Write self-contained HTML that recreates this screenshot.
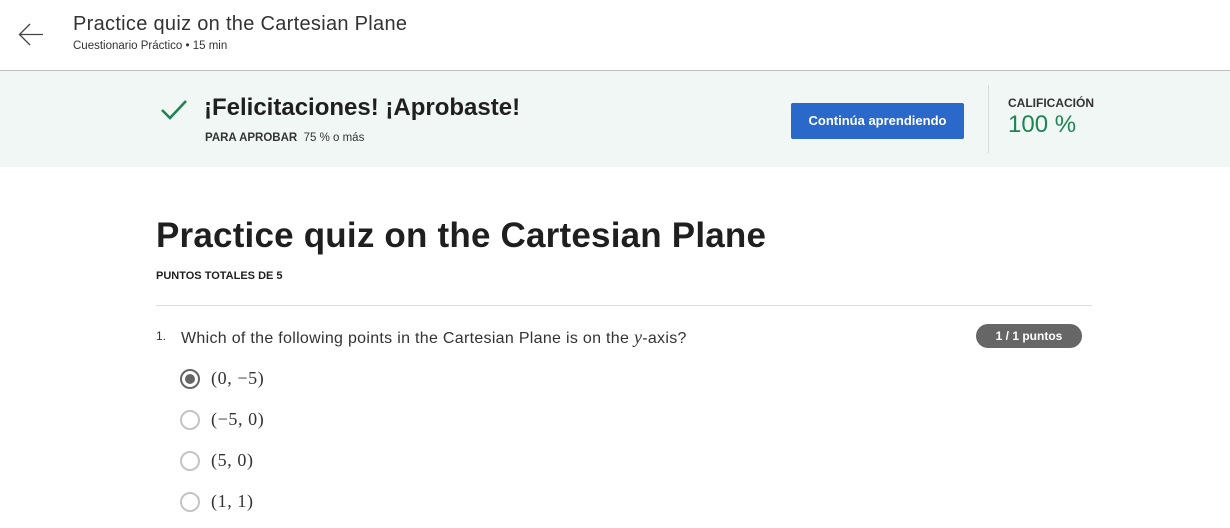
<!DOCTYPE html>
<html><head><meta charset="utf-8"><style>
*{margin:0;padding:0;box-sizing:border-box}
body{width:1230px;height:528px;overflow:hidden;background:#fff;font-family:"Liberation Sans",sans-serif;color:#1f1f1f;position:relative}
.abs{position:absolute;white-space:nowrap}
.serif{font-family:"Liberation Serif",serif;font-size:18px;color:#333;letter-spacing:0.6px}
.radio{position:absolute;width:20px;height:20px;border:2px solid #c4c4c4;border-radius:50%}
</style></head><body>
<svg class="abs" style="left:18px;top:22px" width="26" height="26" viewBox="0 0 26 26"><path d="M25 12.5H2M12 2L1.5 12.5 12 23" fill="none" stroke="#444" stroke-width="1.3"/></svg>
<div class="abs" style="left:73px;top:13px;font-size:20px;color:#333;letter-spacing:0.3px">Practice quiz on the Cartesian Plane</div>
<div class="abs" style="left:73px;top:40px;font-size:11.5px;color:#333">Cuestionario Práctico • 15 min</div>
<div class="abs" style="left:0;top:70px;width:1230px;height:1px;background:#bdbdbd"></div>
<div class="abs" style="left:0;top:71px;width:1230px;height:96px;background:#f0f7f5"></div>
<svg class="abs" style="left:160px;top:99px" width="28" height="22" viewBox="0 0 28 22"><path d="M2 11l8 8L26 2" fill="none" stroke="#1f8354" stroke-width="2.6"/></svg>
<div class="abs" style="left:204px;top:94px;font-size:24px;font-weight:bold;color:#1f1f1f">¡Felicitaciones! ¡Aprobaste!</div>
<div class="abs" style="left:205px;top:132px;font-size:11.5px;color:#333"><b>PARA APROBAR</b>&nbsp; 75 % o más</div>
<div class="abs" style="left:791px;top:103px;width:173px;height:36px;background:#2a69c9;border-radius:2px;color:#fff;font-size:13px;font-weight:bold;text-align:center;line-height:36px">Continúa aprendiendo</div>
<div class="abs" style="left:988px;top:85px;width:1px;height:68px;background:#d8dcdb"></div>
<div class="abs" style="left:1008px;top:96px;font-size:12px;font-weight:bold;color:#333">CALIFICACIÓN</div>
<div class="abs" style="left:1008px;top:111px;font-size:24px;color:#1f8354">100 %</div>
<div class="abs" style="left:156px;top:216px;font-size:35px;font-weight:bold;color:#1f1f1f;letter-spacing:0.2px">Practice quiz on the Cartesian Plane</div>
<div class="abs" style="left:156px;top:270px;font-size:11px;font-weight:bold;color:#1f1f1f">PUNTOS TOTALES DE 5</div>
<div class="abs" style="left:156px;top:305px;width:936px;height:1px;background:#ddd"></div>
<div class="abs" style="left:156px;top:329px;font-size:12px;color:#333">1.</div>
<div class="abs" style="left:181px;top:327px;font-size:16px;color:#333;letter-spacing:0.3px">Which of the following points in the Cartesian Plane is on the <i style="font-family:'Liberation Serif',serif;font-size:18px">y</i>-axis?</div>
<div class="abs" style="left:976px;top:324px;width:106px;height:24px;border-radius:12px;background:#666;color:#fff;font-size:12px;font-weight:bold;text-align:center;line-height:24px">1 / 1 puntos</div>
<div class="radio" style="left:180px;top:369px;border-color:#666"><div style="position:absolute;left:3px;top:3px;width:10px;height:10px;border-radius:50%;background:#666"></div></div>
<div class="abs serif" style="left:211px;top:368px">(0, −5)</div>
<div class="radio" style="left:180px;top:410px"></div>
<div class="abs serif" style="left:211px;top:409px">(−5, 0)</div>
<div class="radio" style="left:180px;top:451px"></div>
<div class="abs serif" style="left:211px;top:450px">(5, 0)</div>
<div class="radio" style="left:180px;top:492px"></div>
<div class="abs serif" style="left:211px;top:491px">(1, 1)</div>
</body></html>
